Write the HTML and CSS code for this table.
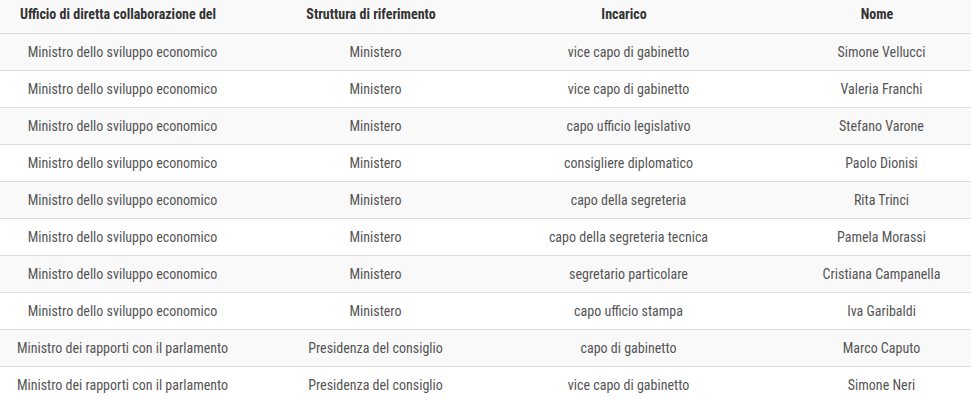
FILE: index.html
```html
<!DOCTYPE html>
<html lang="it">
<head>
<meta charset="utf-8">
<link rel="stylesheet" href="styles.css">
</head>
<body>
<div class="wrap">
<table class="tbl">
  <thead>
    <tr>
      <th>Ufficio di diretta collaborazione del</th>
      <th>Struttura di riferimento</th>
      <th>Incarico</th>
      <th>Nome</th>
    </tr>
  </thead>
  <tbody>
    <tr><td>Ministro dello sviluppo economico</td><td>Ministero</td><td>vice capo di gabinetto</td><td>Simone Vellucci</td></tr>
    <tr><td>Ministro dello sviluppo economico</td><td>Ministero</td><td>vice capo di gabinetto</td><td>Valeria Franchi</td></tr>
    <tr><td>Ministro dello sviluppo economico</td><td>Ministero</td><td>capo ufficio legislativo</td><td>Stefano Varone</td></tr>
    <tr><td>Ministro dello sviluppo economico</td><td>Ministero</td><td>consigliere diplomatico</td><td>Paolo Dionisi</td></tr>
    <tr><td>Ministro dello sviluppo economico</td><td>Ministero</td><td>capo della segreteria</td><td>Rita Trinci</td></tr>
    <tr><td>Ministro dello sviluppo economico</td><td>Ministero</td><td>capo della segreteria tecnica</td><td>Pamela Morassi</td></tr>
    <tr><td>Ministro dello sviluppo economico</td><td>Ministero</td><td>segretario particolare</td><td>Cristiana Campanella</td></tr>
    <tr><td>Ministro dello sviluppo economico</td><td>Ministero</td><td>capo ufficio stampa</td><td>Iva Garibaldi</td></tr>
    <tr><td>Ministro dei rapporti con il parlamento</td><td>Presidenza del consiglio</td><td>capo di gabinetto</td><td>Marco Caputo</td></tr>
    <tr><td>Ministro dei rapporti con il parlamento</td><td>Presidenza del consiglio</td><td>vice capo di gabinetto</td><td>Simone Neri</td></tr>
  </tbody>
</table>
</div>
</body>
</html>
```
FILE: styles.css
```css
html, body {
  margin: 0;
  padding: 0;
  background: #ffffff;
  overflow: hidden;
}

.wrap {
  width: 971px;
  overflow: hidden;
}

.tbl {
  width: 1012px;
  margin-left: -4px;
  table-layout: fixed;
  border-collapse: collapse;
  font-family: "Roboto Condensed", Roboto, "Liberation Sans Narrow", sans-serif;
  font-stretch: condensed;
  font-size: 14px;
  line-height: 20px;
}

.tbl th {
  background: #f9f9f9;
  color: #333333;
  font-weight: 700;
  text-align: center;
  padding: 4px 19px 9px 10px;
  border-bottom: 1px solid #dddddd;
}

.tbl td {
  color: #555555;
  font-weight: 400;
  text-align: center;
  padding: 8px 10px;
  border-bottom: 1px solid #dddddd;
  white-space: nowrap;
}

.tbl tbody tr:nth-child(odd) td {
  background: #f9f9f9;
}
```
